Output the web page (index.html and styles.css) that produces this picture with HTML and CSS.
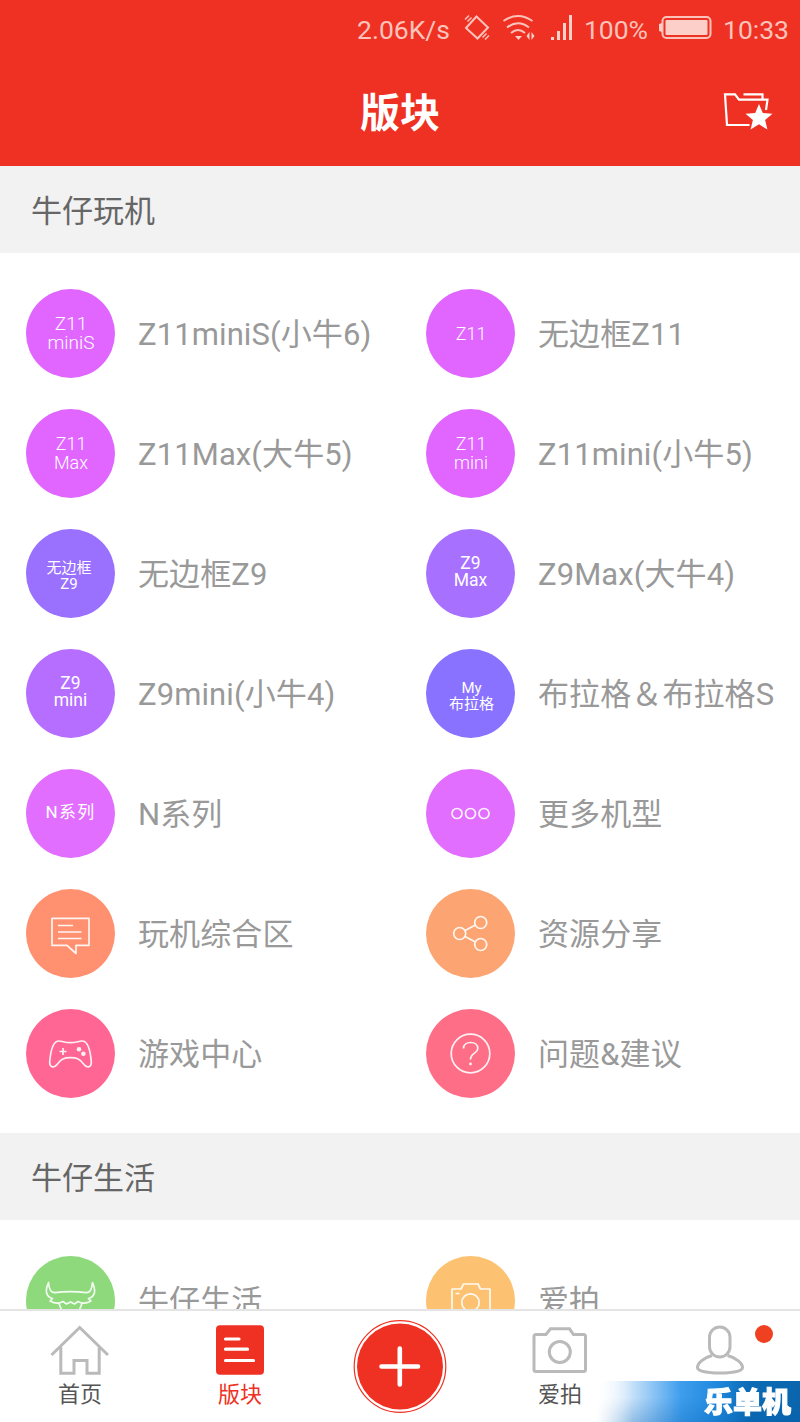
FILE: index.html
```html
<!DOCTYPE html>
<html lang="zh-CN">
<head>
    <meta charset="UTF-8">
    <meta name="viewport" content="width=device-width, initial-scale=1.0">
    <title>版块</title>
    <link rel="stylesheet" href="styles.css">
</head>
<body>
    <div class="app">
        <header class="header">
            <div class="status-bar">
                <span class="speed">2.06K/s</span>
                <svg class="icon-vibrate" width="28" height="28" viewBox="463 14 28 28">
                    <path d="M476.500 16.500 488 27.500 477.500 38.500 466 28Z"/>
                    <path class="waves" d="M465 19.500l4-4 M467.500 21.500l4-4 M482.500 37.500l4-4 M485 39.500l4-4"/>
                </svg>
                <svg class="icon-wifi" width="34" height="28" viewBox="502 14 34 28">
                    <path d="M503.500 21Q518 11 532.500 21 M507 27.500Q518 19 529 27.500 M511 33Q518 27 525 33"/>
                    <path class="solid" d="M515 36h7l-3.500 4z M529.500 32v8l-3-4z M531.500 32v8l3-4z"/>
                </svg>
                <svg class="icon-signal" width="22" height="28" viewBox="551 14 22 28">
                    <path class="solid" d="M551 37h3v3h-3z M557 31h3v9h-3z M563 23h3v17h-3z M569 15h3v25h-3z"/>
                </svg>
                <span class="percent">100%</span>
                <svg class="icon-battery" width="53" height="28" viewBox="659 14 53 28">
                    <rect x="662.500" y="17" width="48" height="21" rx="4"/>
                    <rect class="solid" x="665.500" y="20" width="42" height="15" rx="1"/>
                    <path class="solid" d="M659 24l3-1v9l-3-1z"/>
                </svg>
                <span class="time">10:33</span>
            </div>
            <div class="title-bar">
                <h1>版块</h1>
                <svg class="icon-folder" width="50" height="40" viewBox="723 91 50 40">
                    <path d="M749.500 125H727L725 94.300H735L739 99.700H767.500L766 110 M743.500 94.300H762.500V99"/>
                    <path class="solid" d="M759 104l3.800 9 9.700.8-7.400 6.200 2.300 9.500-8.400-5.200-8.400 5.200 2.300-9.500-7.400-6.200 9.700-.8z"/>
                </svg>
            </div>
        </header>

        <main class="content">
            <h2>牛仔玩机</h2>
            <ul class="boards">
                <li>
                    <span class="badge pink thin"><span>Z11</span><span>miniS</span></span>
                    <span class="name">Z11miniS(小牛6)</span>
                </li>
                <li>
                    <span class="badge pink thin small"><span>Z11</span></span>
                    <span class="name">无边框Z11</span>
                </li>
                <li>
                    <span class="badge pink thin small"><span>Z11</span><span>Max</span></span>
                    <span class="name">Z11Max(大牛5)</span>
                </li>
                <li>
                    <span class="badge pink thin small"><span>Z11</span><span>mini</span></span>
                    <span class="name">Z11mini(小牛5)</span>
                </li>
                <li>
                    <span class="badge violet cjk"><span>无边框</span><span>Z9</span></span>
                    <span class="name">无边框Z9</span>
                </li>
                <li>
                    <span class="badge purple bold"><span>Z9</span><span>Max</span></span>
                    <span class="name">Z9Max(大牛4)</span>
                </li>
                <li>
                    <span class="badge orchid bold"><span>Z9</span><span>mini</span></span>
                    <span class="name">Z9mini(小牛4)</span>
                </li>
                <li>
                    <span class="badge indigo cjk"><span>My</span><span>布拉格</span></span>
                    <span class="name">布拉格＆布拉格S</span>
                </li>
                <li>
                    <span class="badge magenta series"><span>N系列</span></span>
                    <span class="name">N系列</span>
                </li>
                <li>
                    <span class="badge magenta">
                        <svg viewBox="0 0 89 89">
                            <circle cx="31" cy="44.500" r="5"/>
                            <circle cx="44.500" cy="44.500" r="5"/>
                            <circle cx="58" cy="44.500" r="5"/>
                        </svg>
                    </span>
                    <span class="name">更多机型</span>
                </li>
                <li>
                    <span class="badge coral">
                        <svg viewBox="0 0 89 89">
                            <path d="M26 29.300H63V56.300H50V64.500L41 56.300H26Z M32 36.500H47 M32 43H55.500 M32 49.500H55.500"/>
                        </svg>
                    </span>
                    <span class="name">玩机综合区</span>
                </li>
                <li>
                    <span class="badge orange">
                        <svg viewBox="0 0 89 89">
                            <circle cx="33.700" cy="44.500" r="6"/>
                            <circle cx="54.700" cy="33.500" r="6"/>
                            <circle cx="54.700" cy="55.500" r="6"/>
                            <path d="M39 41.500 49.500 36 M39 47.500 49.500 53"/>
                        </svg>
                    </span>
                    <span class="name">资源分享</span>
                </li>
                <li>
                    <span class="badge rose">
                        <svg viewBox="0 0 89 89">
                            <path d="M44.500 33.700C38 33.700 37 32 33 32C27 32 24.500 43 23.700 53C23.400 58.500 28 59.500 31 55.500C35 50 38 48.700 44.500 48.700S54 50 58 55.500C61 59.500 65.600 58.500 65.300 53C64.500 43 62 32 56 32C52 32 51 33.700 44.500 33.700Z"/>
                            <path d="M33.500 42.500H40.500 M37 39V46"/>
                            <circle class="dot" cx="53" cy="40.300" r="2.300"/>
                            <circle class="dot" cx="57.400" cy="44.700" r="2.300"/>
                        </svg>
                    </span>
                    <span class="name">游戏中心</span>
                </li>
                <li>
                    <span class="badge salmon">
                        <svg viewBox="0 0 89 89">
                            <circle cx="44.500" cy="44.500" r="19.300"/>
                            <path d="M37.500 39.500C37.500 31.500 51.800 31.500 51.800 39.500C51.800 44.500 44.500 44 44.500 50.500"/>
                            <circle class="dot" cx="44.500" cy="55" r="1.400"/>
                        </svg>
                    </span>
                    <span class="name">问题&amp;建议</span>
                </li>
            </ul>

            <h2>牛仔生活</h2>
            <ul class="boards">
                <li>
                    <span class="badge green">
                        <svg viewBox="0 0 89 89">
                            <path d="M22.500 26.500C23 33 24.500 37 29 36.700Q44.500 34.500 60 36.700C64.500 37 66 33 66.500 26.500C70 34 69.500 40.500 62.500 42.500L65 45Q58 49 52 45.500L48.500 48 44.500 46 40.500 48 37 45.500Q31 49 24 45L26.500 42.500C19.500 40.500 19 34 22.500 26.500Z M33 47.500 38 60 M56 47.500 51 60"/>
                        </svg>
                    </span>
                    <span class="name">牛仔生活</span>
                </li>
                <li>
                    <span class="badge amber">
                        <svg viewBox="0 0 89 89">
                            <path d="M26 62V33H35L37.500 28H52L54.500 33H64V62Z M29.500 37.500H33.500"/>
                            <circle cx="44.500" cy="46.500" r="8.700"/>
                        </svg>
                    </span>
                    <span class="name">爱拍</span>
                </li>
            </ul>
        </main>

        <nav class="tabs">
            <a class="tab">
                <svg width="60" height="52" viewBox="50 1324 60 52">
                    <path d="M51.500 1355 79.700 1327.500 108 1355 M60.800 1347V1373.200H74V1360.500H87V1373.200H99.200V1347"/>
                </svg>
                <span>首页</span>
            </a>
            <a class="tab active">
                <svg width="60" height="52" viewBox="210 1324 60 52">
                    <rect class="tile" x="216" y="1325.300" width="48" height="49.500" rx="4"/>
                    <path class="bars" d="M225.500 1339H239 M225.500 1349.200H247.500 M225.500 1360.500H253.500"/>
                </svg>
                <span>版块</span>
            </a>
            <a class="tab add">
                <svg width="94" height="94" viewBox="353 1320 94 94">
                    <circle class="ring" cx="400" cy="1366.500" r="45.800"/>
                    <circle class="disc" cx="400" cy="1366.500" r="43"/>
                    <path class="plus" d="M381.500 1366.500H418 M399.800 1348.500V1384.500"/>
                </svg>
            </a>
            <a class="tab">
                <svg width="60" height="52" viewBox="530 1324 60 52">
                    <path d="M536 1334.500H546L550.500 1328.800H569.500L573.500 1334.500H583.500Q585.500 1334.500 585.500 1336.500V1369.500Q585.500 1371.500 583.500 1371.500H536Q534 1371.500 534 1369.500V1336.500Q534 1334.500 536 1334.500Z"/>
                    <circle cx="559.800" cy="1352" r="10.500"/>
                </svg>
                <span>爱拍</span>
            </a>
            <a class="tab">
                <svg width="60" height="52" viewBox="690 1324 60 52">
                    <rect x="709.500" y="1327" width="20.500" height="30" rx="10.200"/>
                    <path d="M712 1355.500C704 1357.500 697.500 1363 697.500 1367.500C697.500 1371.500 709 1373 720 1373S742.500 1371.500 742.500 1367.500C742.500 1363 735.500 1357.500 727.500 1355.500"/>
                </svg>
                <i class="unread"></i>
            </a>
            <div class="watermark">乐单机</div>
        </nav>
    </div>
</body>
</html>
```

FILE: styles.css
```css
* {
    box-sizing: border-box;
}

body {
    margin: 0;
    font-family: Roboto, "Noto Sans CJK SC", sans-serif;
    background-color: #fff;
}

.app {
    width: 800px;
    height: 1422px;
    display: flex;
    flex-direction: column;
    overflow: hidden;
}

/* Header */
.header {
    height: 166px;
    flex: none;
    background-color: #ef3123;
}

.status-bar {
    height: 56px;
    display: flex;
    align-items: center;
    justify-content: flex-end;
    padding-right: 11px;
    font-size: 26.5px;
    line-height: 32px;
    color: #fcc3bb;
}

.status-bar span {
    margin-top: 3px;
}

.status-bar svg {
    fill: none;
    stroke: #fcc3bb;
    stroke-width: 2;
}

.status-bar .waves {
    stroke-width: 1.5;
}

.status-bar .solid {
    fill: #fccfc9;
    stroke: none;
}

.icon-vibrate { margin-left: 13px; }
.icon-wifi { margin-left: 11px; }
.icon-signal { margin-left: 15px; }
.percent { margin-left: 11px; }
.icon-battery { margin-left: 11px; }
.time { margin-left: 11px; }

.title-bar {
    height: 110px;
    display: grid;
    grid-template-columns: 1fr auto 1fr;
    align-items: center;
    padding-right: 27px;
    padding-left: 27px;
}

.title-bar h1 {
    grid-column: 2;
    margin: 0;
    padding-top: 5px;
    font-size: 40px;
    font-weight: 700;
    line-height: 56px;
    color: #fff;
}

.icon-folder {
    justify-self: end;
    fill: none;
    stroke: #fff;
    stroke-width: 2.2;
}

.icon-folder .solid {
    fill: #fff;
    stroke: none;
}

/* Boards */
.content {
    flex: 1;
    min-height: 0;
    overflow: hidden;
}

.content h2 {
    height: 87px;
    margin: 0;
    padding-top: 2px;
    padding-left: 31px;
    font-size: 31px;
    font-weight: 400;
    line-height: 87px;
    color: #666;
    background-color: #f2f2f2;
}

.boards {
    margin: 0;
    padding: 20px 0;
    list-style: none;
    display: grid;
    grid-template-columns: 400px 400px;
    grid-auto-rows: 120px;
}

.boards li {
    display: flex;
    align-items: center;
    padding-left: 26px;
}

.name {
    margin-left: 23px;
    padding-top: 4px;
    font-size: 31px;
    line-height: 44px;
    letter-spacing: 0.1px;
    color: #999;
    white-space: nowrap;
}

.badge {
    width: 89px;
    height: 89px;
    flex: none;
    display: flex;
    flex-direction: column;
    align-items: center;
    justify-content: center;
    border-radius: 50%;
    font-size: 18px;
    line-height: 19px;
    color: #fff;
}

.badge svg {
    width: 89px;
    height: 89px;
    fill: none;
    stroke: #fff;
    stroke-width: 1.7;
    stroke-linejoin: round;
    opacity: 0.9;
}

.badge .dot {
    fill: #fff;
    stroke: none;
}

.thin {
    padding-left: 1px;
    font-size: 19px;
    font-weight: 300;
}

.thin.small {
    font-size: 18px;
}

.bold {
    padding-bottom: 3px;
    font-size: 17.5px;
    line-height: 17px;
}

.cjk {
    padding-top: 5px;
    padding-right: 3px;
    font-size: 15px;
    line-height: 16px;
}

.indigo.cjk {
    padding-right: 0;
    padding-left: 2px;
}

.series {
    padding-bottom: 2px;
    font-size: 17px;
    letter-spacing: 1.3px;
}

.pink { background-color: #e066ff; }
.violet { background-color: #9a70ff; }
.purple { background-color: #a870ff; }
.orchid { background-color: #b56eff; }
.indigo { background-color: #8872ff; }
.magenta { background-color: #e26eff; }
.coral { background-color: #ff9070; }
.orange { background-color: #fca572; }
.rose { background-color: #ff6694; }
.salmon { background-color: #ff6e87; }
.green { background-color: #8dd97c; }
.amber { background-color: #fdc271; }

/* Bottom tabs */
.tabs {
    position: relative;
    height: 113px;
    flex: none;
    display: grid;
    grid-template-columns: repeat(5, 160px);
    border-top: 2px solid #e4e4e4;
    background-color: #fff;
}

.tab {
    position: relative;
    display: flex;
    flex-direction: column;
    align-items: center;
    padding-top: 13px;
    font-size: 22px;
    line-height: 30px;
    color: #555;
}

.tab svg {
    fill: none;
    stroke: #bababa;
    stroke-width: 3;
}

.tab span {
    margin-top: 4px;
}

.tab.active {
    color: #ef3123;
}

.tab .tile {
    fill: #ef3123;
    stroke: none;
}

.tab .bars {
    stroke: #fff;
    stroke-width: 3.2;
    stroke-linecap: round;
}

.add {
    padding-top: 9px;
}

.tab .ring {
    stroke: #ef3123;
    stroke-width: 1.2;
}

.tab .disc {
    fill: #ef3123;
    stroke: none;
}

.tab .plus {
    stroke: #fff;
    stroke-width: 4.6;
    stroke-linecap: round;
}

.unread {
    position: absolute;
    top: 14px;
    left: 115px;
    width: 18px;
    height: 18px;
    border-radius: 50%;
    background-color: #f04022;
}

.watermark {
    position: absolute;
    right: 0;
    bottom: 0;
    width: 204px;
    height: 41px;
    padding-top: 2px;
    padding-right: 9px;
    text-align: right;
    font-size: 29px;
    font-weight: 900;
    line-height: 40px;
    color: #fff;
    -webkit-text-stroke: 1px #fff;
    background: linear-gradient(to top, rgba(0, 90, 170, 0.25), rgba(0, 110, 200, 0) 60%), linear-gradient(to right, #fff, #c4e0f9 18%, #3d9ded 42%, #1f88dc 60%, #0c6bb5 75%, #0a65ad);
    -webkit-mask-image: linear-gradient(to right, transparent, #000 18%);
}
```
